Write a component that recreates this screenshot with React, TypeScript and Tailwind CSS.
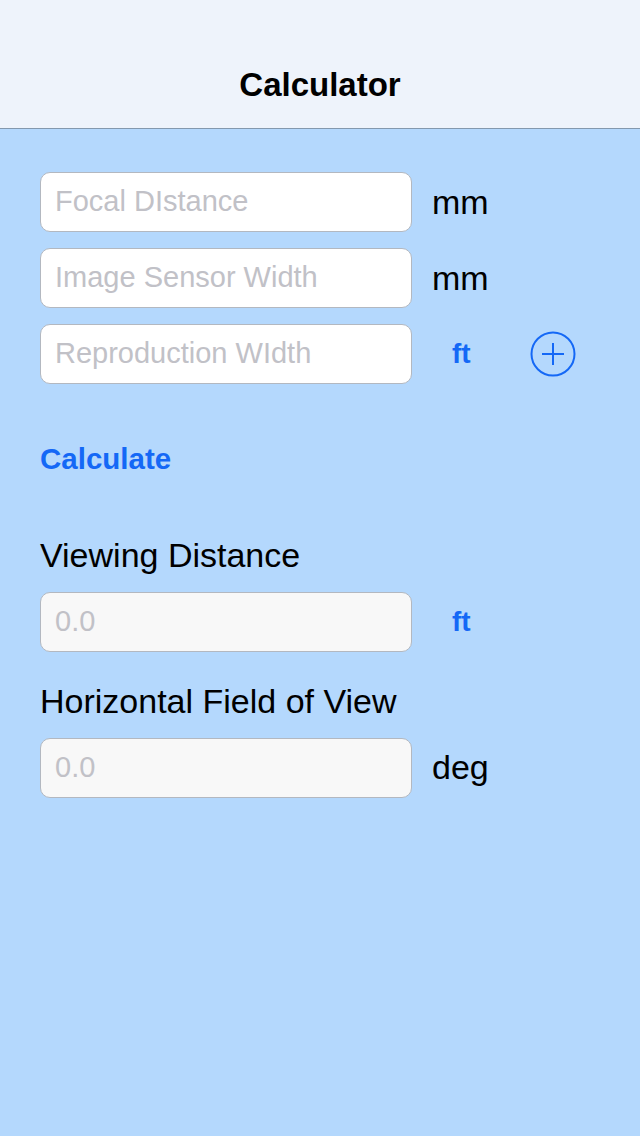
const font = "font-['Liberation_Sans',Arial,sans-serif]"

function Field({ placeholder, output }: { placeholder: string; output?: boolean }) {
  return (
    <div
      className={`flex h-[60px] w-[372px] items-center rounded-[10px] border border-[#b3b8c0] px-[14px] text-[29px] text-[#c1c1c7] ${
        output ? 'bg-[#f8f8f8]' : 'bg-white'
      }`}
    >
      {placeholder}
    </div>
  )
}

function Row({ children, unit, blue }: { children: React.ReactNode; unit: string; blue?: boolean }) {
  return (
    <div className="flex items-center">
      {children}
      {blue ? (
        <span className="ml-[40px] text-[28px] font-bold text-[#1468f6]">{unit}</span>
      ) : (
        <span className="ml-[20px] text-[34px] text-black">{unit}</span>
      )}
    </div>
  )
}

export default function App() {
  return (
    <div className={`flex h-[1136px] w-[640px] flex-col bg-[#b4d8fd] ${font}`}>
      <div className="flex h-[129px] shrink-0 items-end justify-center border-b border-[#8398ae] bg-[#eef3fb] pb-[27px]">
        <h1 className="text-[33px] font-bold leading-none text-black">Calculator</h1>
      </div>

      <div className="flex flex-col px-[40px] pt-[43px]">
        <div className="flex flex-col gap-[16px]">
          <Row unit="mm">
            <Field placeholder="Focal DIstance" />
          </Row>
          <Row unit="mm">
            <Field placeholder="Image Sensor Width" />
          </Row>
          <div className="flex items-center">
            <Row unit="ft" blue>
              <Field placeholder="Reproduction WIdth" />
            </Row>
            <svg className="ml-[59px]" width="46" height="46" viewBox="0 0 46 46" fill="none" stroke="#1468f6">
              <circle cx="23" cy="23" r="21.5" strokeWidth="2" />
              <path d="M12 23h22M23 12v22" strokeWidth="2" />
            </svg>
          </div>
        </div>

        <button className="mt-[60px] self-start text-[29.5px] font-bold leading-none text-[#1468f6]">Calculate</button>

        <p className="mt-[64px] text-[34px] leading-none text-black">Viewing Distance</p>
        <div className="mt-[20px]">
          <Row unit="ft" blue>
            <Field placeholder="0.0" output />
          </Row>
        </div>

        <p className="mt-[32px] text-[34px] leading-none text-black">Horizontal Field of View</p>
        <div className="mt-[20px]">
          <Row unit="deg">
            <Field placeholder="0.0" output />
          </Row>
        </div>
      </div>
    </div>
  )
}
